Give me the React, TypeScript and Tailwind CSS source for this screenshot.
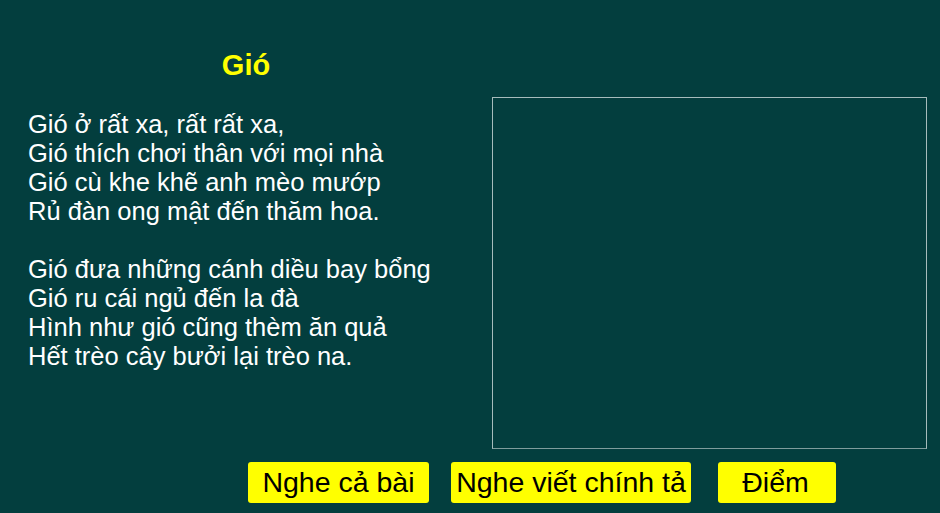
const poem = [
  [
    "Gió ở rất xa, rất rất xa,",
    "Gió thích chơi thân với mọi nhà",
    "Gió cù khe khẽ anh mèo mướp",
    "Rủ đàn ong mật đến thăm hoa.",
  ],
  [
    "Gió đưa những cánh diều bay bổng",
    "Gió ru cái ngủ đến la đà",
    "Hình như gió cũng thèm ăn quả",
    "Hết trèo cây bưởi lại trèo na.",
  ],
];

const buttons = [
  { id: 1, label: "Nghe cả bài", className: "w-[181px]" },
  { id: 2, label: "Nghe viết chính tả", className: "ml-[22px] w-[240px]" },
  { id: 3, label: "Điểm", className: "ml-[27px] w-[118px] pr-[3px]" },
];

const App = () => {
  return (
    <div className="flex h-[513px] w-[940px] flex-col overflow-hidden bg-[#033e3e] font-['Liberation_Sans',Arial,sans-serif]">
      <div className="flex">
        {/* Poem */}
        <div className="w-[492px]">
          <h1 className="mt-[49px] text-center text-[29px] leading-[32px] font-bold text-[#ffff00]">
            Gió
          </h1>
          <div className="mt-[29px] flex flex-col gap-y-[29px] pl-[28px] text-[25.5px] leading-[29px] text-white">
            {poem.map((stanza, i) => (
              <div key={i}>
                {stanza.map((line) => (
                  <p key={line} className="whitespace-nowrap">
                    {line}
                  </p>
                ))}
              </div>
            ))}
          </div>
        </div>

        {/* Writing area */}
        <div className="mt-[97px] h-[352px] w-[435px] border border-[#a6bcbc] border-b-[#7f9c9c]" />
      </div>

      {/* Actions */}
      <div className="mt-[13px] flex pl-[248px]">
        {buttons.map((b) => (
          <button
            key={b.id}
            className={`h-[41px] rounded-[3px] bg-[#ffff00] text-center text-[28.5px] leading-[41px] whitespace-nowrap text-black ${b.className}`}
          >
            {b.label}
          </button>
        ))}
      </div>
    </div>
  );
};

export default App;
